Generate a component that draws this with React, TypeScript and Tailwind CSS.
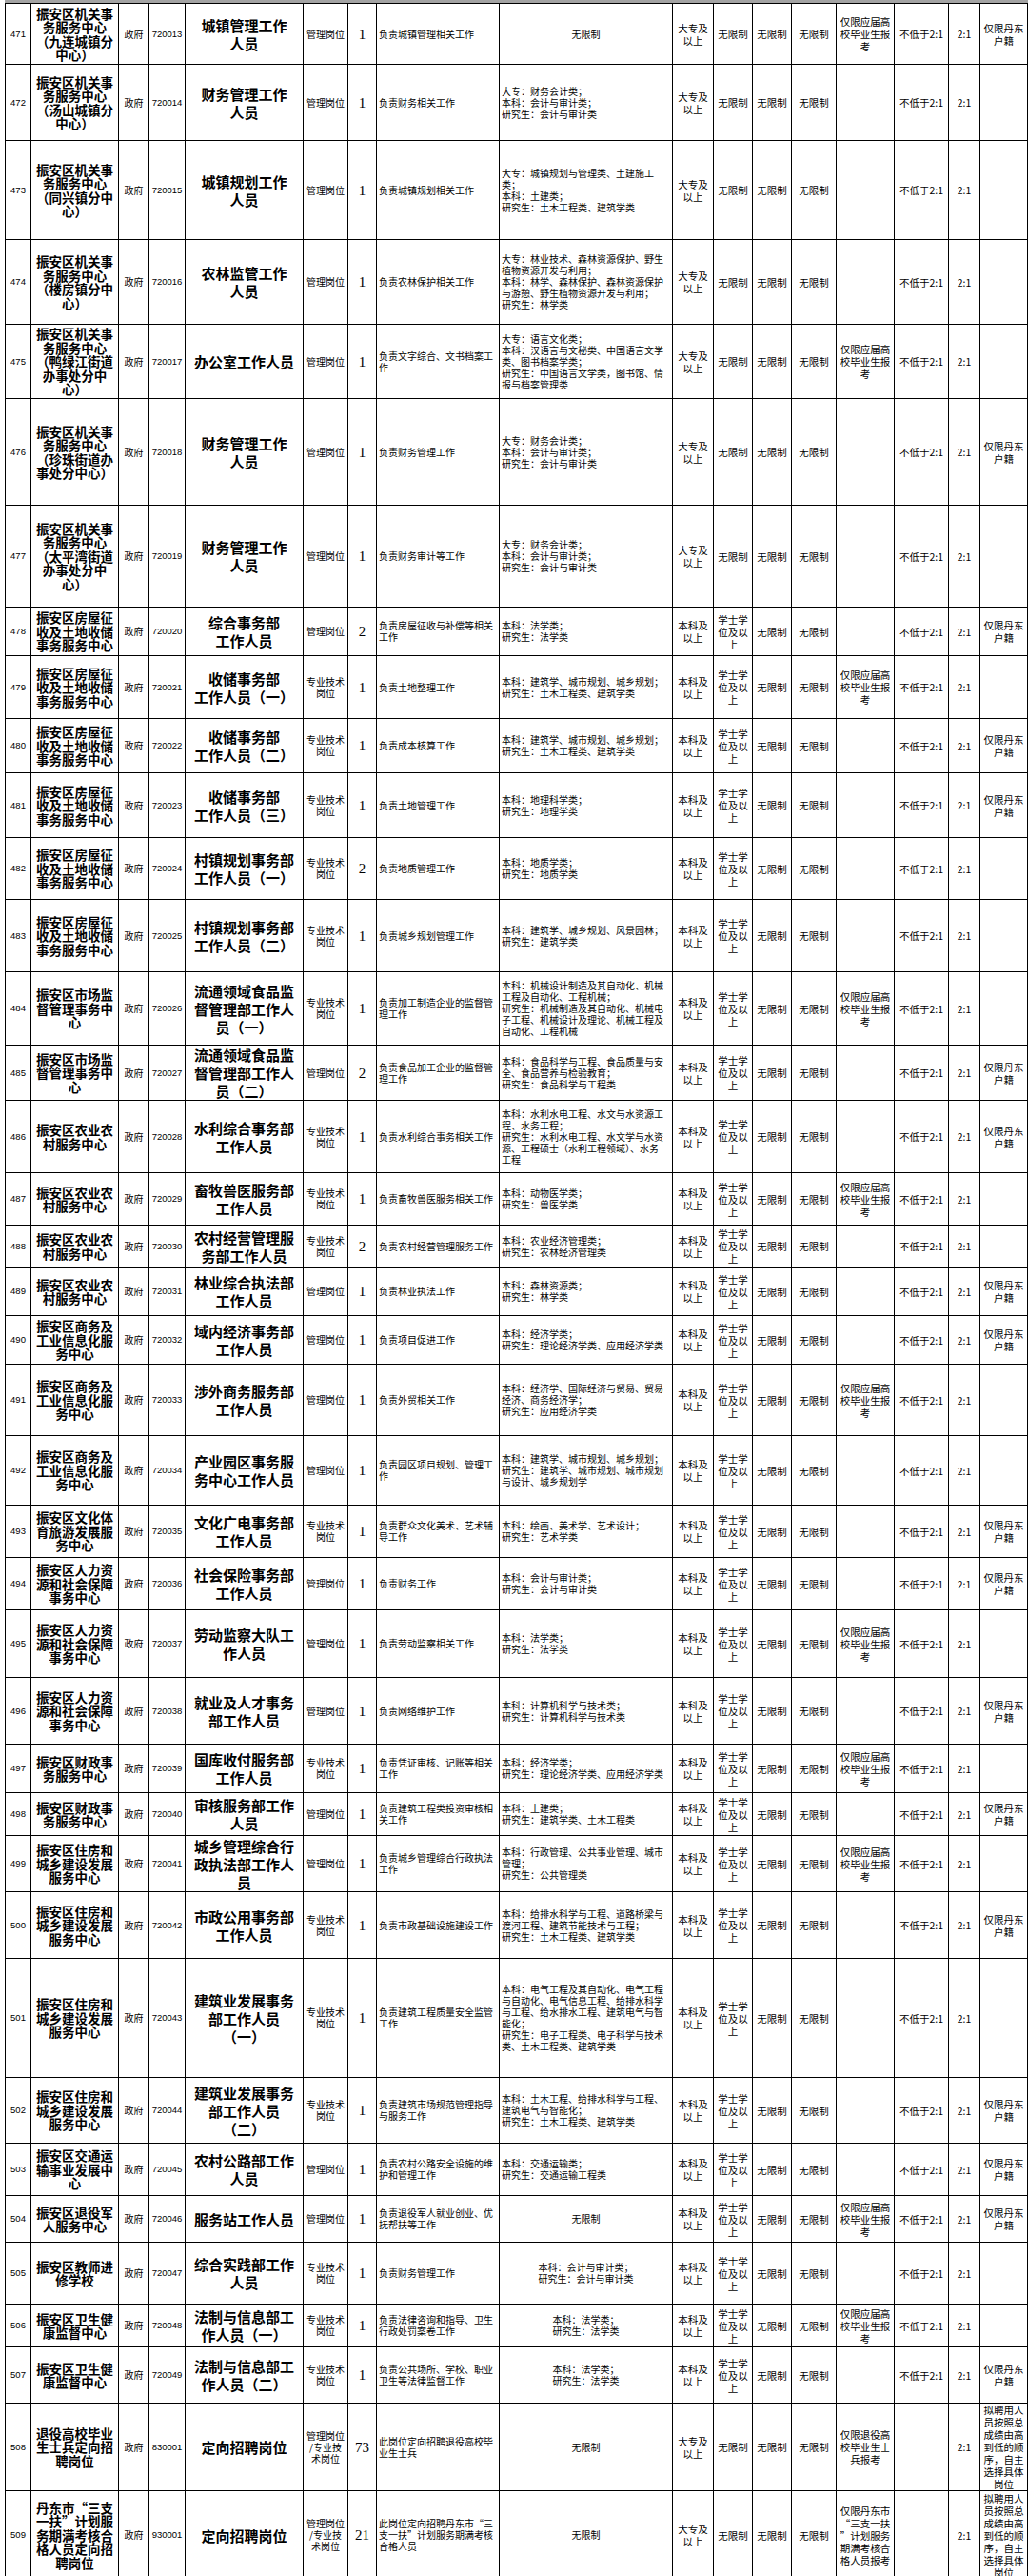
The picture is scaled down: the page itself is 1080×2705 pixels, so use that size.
const JY = "仅限应届高\n校毕业生报\n考";
const DD = "仅限丹东\n户籍";
const BK = "本科及\n以上";
const DZ = "大专及\n以上";
const XS = "学士学\n位及以\n上";
const ZJ = "专业技术\n岗位";
const GL = "管理岗位";
const WX = "无限制";

const JG1 = "振安区机关事\n务服务中心\n";
const FW = "振安区房屋征\n收及土地收储\n事务服务中心";
const SC = "振安区市场监\n督管理事务中\n心";
const NY = "振安区农业农\n村服务中心";
const SW = "振安区商务及\n工业信息化服\n务中心";
const RL = "振安区人力资\n源和社会保障\n事务中心";
const CZ = "振安区财政事\n务服务中心";
const ZF = "振安区住房和\n城乡建设发展\n服务中心";
const WS = "振安区卫生健\n康监督中心";
const KJ = "大专：财务会计类；\n本科：会计与审计类；\n研究生：会计与审计类";
const JZ = "本科：建筑学、城市规划、城乡规划；\n研究生：土木工程类、建筑学类";
const DX = "拟聘用人\n员按照总\n成绩由高\n到低的顺\n序，自主\n选择具体\n岗位";

type Row = {
  n: number;
  h: string;
  unit: string;
  code: string;
  pos: string;
  type: string;
  cnt: string;
  desc: string;
  major: string;
  mc?: boolean;
  edu: string;
  deg: string;
  c13: string;
  c14?: string;
  c16: string;
};

const rows: Row[] = [
  { n: 471, h: "h-[64px]", unit: JG1 + "（九连城镇分\n中心）", code: "720013", pos: "城镇管理工作\n人员", type: GL, cnt: "1", desc: "负责城镇管理相关工作", major: WX, mc: true, edu: DZ, deg: WX, c13: JY, c16: DD },
  { n: 472, h: "h-[80px]", unit: JG1 + "（汤山城镇分\n中心）", code: "720014", pos: "财务管理工作\n人员", type: GL, cnt: "1", desc: "负责财务相关工作", major: KJ, edu: DZ, deg: WX, c13: "", c16: "" },
  { n: 473, h: "h-[104px]", unit: JG1 + "（同兴镇分中\n心）", code: "720015", pos: "城镇规划工作\n人员", type: GL, cnt: "1", desc: "负责城镇规划相关工作", major: "大专：城镇规划与管理类、土建施工\n类；\n本科：土建类；\n研究生：土木工程类、建筑学类", edu: DZ, deg: WX, c13: "", c16: "" },
  { n: 474, h: "h-[89px]", unit: JG1 + "（楼房镇分中\n心）", code: "720016", pos: "农林监管工作\n人员", type: GL, cnt: "1", desc: "负责农林保护相关工作", major: "大专：林业技术、森林资源保护、野生\n植物资源开发与利用；\n本科：林学、森林保护、森林资源保护\n与游憩、野生植物资源开发与利用；\n研究生：林学类", edu: DZ, deg: WX, c13: "", c16: "" },
  { n: 475, h: "h-[78px]", unit: JG1 + "（鸭绿江街道\n办事处分中\n心）", code: "720017", pos: "办公室工作人员", type: GL, cnt: "1", desc: "负责文字综合、文书档案工\n作", major: "大专：语言文化类；\n本科：汉语言与文秘类、中国语言文学\n类、图书档案学类；\n研究生：中国语言文学类，图书馆、情\n报与档案管理类", edu: DZ, deg: WX, c13: JY, c16: "" },
  { n: 476, h: "h-[112px]", unit: JG1 + "（珍珠街道办\n事处分中心）", code: "720018", pos: "财务管理工作\n人员", type: GL, cnt: "1", desc: "负责财务管理工作", major: KJ, edu: DZ, deg: WX, c13: "", c16: DD },
  { n: 477, h: "h-[107px]", unit: JG1 + "（太平湾街道\n办事处分中\n心）", code: "720019", pos: "财务管理工作\n人员", type: GL, cnt: "1", desc: "负责财务审计等工作", major: KJ, edu: DZ, deg: WX, c13: "", c16: "" },
  { n: 478, h: "h-[51px]", unit: FW, code: "720020", pos: "综合事务部\n工作人员", type: GL, cnt: "2", desc: "负责房屋征收与补偿等相关\n工作", major: "本科：法学类；\n研究生：法学类", edu: BK, deg: XS, c13: "", c16: DD },
  { n: 479, h: "h-[66px]", unit: FW, code: "720021", pos: "收储事务部\n工作人员（一）", type: ZJ, cnt: "1", desc: "负责土地整理工作", major: JZ, edu: BK, deg: XS, c13: JY, c16: "" },
  { n: 480, h: "h-[57px]", unit: FW, code: "720022", pos: "收储事务部\n工作人员（二）", type: ZJ, cnt: "1", desc: "负责成本核算工作", major: JZ, edu: BK, deg: XS, c13: "", c16: DD },
  { n: 481, h: "h-[68px]", unit: FW, code: "720023", pos: "收储事务部\n工作人员（三）", type: ZJ, cnt: "1", desc: "负责土地管理工作", major: "本科：地理科学类；\n研究生：地理学类", edu: BK, deg: XS, c13: "", c16: DD },
  { n: 482, h: "h-[65px]", unit: FW, code: "720024", pos: "村镇规划事务部\n工作人员（一）", type: ZJ, cnt: "2", desc: "负责地质管理工作", major: "本科：地质学类；\n研究生：地质学类", edu: BK, deg: XS, c13: "", c16: "" },
  { n: 483, h: "h-[76px]", unit: FW, code: "720025", pos: "村镇规划事务部\n工作人员（二）", type: ZJ, cnt: "1", desc: "负责城乡规划管理工作", major: "本科：建筑学、城乡规划、风景园林；\n研究生：建筑学类", edu: BK, deg: XS, c13: "", c16: "" },
  { n: 484, h: "h-[77px]", unit: SC, code: "720026", pos: "流通领域食品监\n督管理部工作人\n员（一）", type: ZJ, cnt: "1", desc: "负责加工制造企业的监督管\n理工作", major: "本科：机械设计制造及其自动化、机械\n工程及自动化、工程机械；\n研究生：机械制造及其自动化、机械电\n子工程、机械设计及理论、机械工程及\n自动化、工程机械", edu: BK, deg: XS, c13: JY, c16: "" },
  { n: 485, h: "h-[53px]", unit: SC, code: "720027", pos: "流通领域食品监\n督管理部工作人\n员（二）", type: GL, cnt: "2", desc: "负责食品加工企业的监督管\n理工作", major: "本科：食品科学与工程、食品质量与安\n全、食品营养与检验教育；\n研究生：食品科学与工程类", edu: BK, deg: XS, c13: "", c16: DD },
  { n: 486, h: "h-[76px]", unit: NY, code: "720028", pos: "水利综合事务部\n工作人员", type: ZJ, cnt: "1", desc: "负责水利综合事务相关工作", major: "本科：水利水电工程、水文与水资源工\n程、水务工程；\n研究生：水利水电工程、水文学与水资\n源、工程硕士（水利工程领域）、水务\n工程", edu: BK, deg: XS, c13: "", c16: DD },
  { n: 487, h: "h-[55px]", unit: NY, code: "720029", pos: "畜牧兽医服务部\n工作人员", type: ZJ, cnt: "1", desc: "负责畜牧兽医服务相关工作", major: "本科：动物医学类；\n研究生：兽医学类", edu: BK, deg: XS, c13: JY, c16: "" },
  { n: 488, h: "h-[44px]", unit: NY, code: "720030", pos: "农村经营管理服\n务部工作人员", type: ZJ, cnt: "2", desc: "负责农村经营管理服务工作", major: "本科：农业经济管理类；\n研究生：农林经济管理类", edu: BK, deg: XS, c13: "", c16: "" },
  { n: 489, h: "h-[51px]", unit: NY, code: "720031", pos: "林业综合执法部\n工作人员", type: GL, cnt: "1", desc: "负责林业执法工作", major: "本科：森林资源类；\n研究生：林学类", edu: BK, deg: XS, c13: "", c16: DD },
  { n: 490, h: "h-[51px]", unit: SW, code: "720032", pos: "域内经济事务部\n工作人员", type: GL, cnt: "1", desc: "负责项目促进工作", major: "本科：经济学类；\n研究生：理论经济学类、应用经济学类", edu: BK, deg: XS, c13: "", c16: DD },
  { n: 491, h: "h-[75px]", unit: SW, code: "720033", pos: "涉外商务服务部\n工作人员", type: GL, cnt: "1", desc: "负责外贸相关工作", major: "本科：经济学、国际经济与贸易、贸易\n经济、商务经济学；\n研究生：应用经济学类", edu: BK, deg: XS, c13: JY, c16: "" },
  { n: 492, h: "h-[73px]", unit: SW, code: "720034", pos: "产业园区事务服\n务中心工作人员", type: GL, cnt: "1", desc: "负责园区项目规划、管理工\n作", major: "本科：建筑学、城市规划、城乡规划；\n研究生：建筑学、城市规划、城市规划\n与设计、城乡规划学", edu: BK, deg: XS, c13: "", c16: "" },
  { n: 493, h: "h-[55px]", unit: "振安区文化体\n育旅游发展服\n务中心", code: "720035", pos: "文化广电事务部\n工作人员", type: ZJ, cnt: "1", desc: "负责群众文化美术、艺术辅\n导工作", major: "本科：绘画、美术学、艺术设计；\n研究生：艺术学类", edu: BK, deg: XS, c13: "", c16: DD },
  { n: 494, h: "h-[55px]", unit: RL, code: "720036", pos: "社会保险事务部\n工作人员", type: GL, cnt: "1", desc: "负责财务工作", major: "本科：会计与审计类；\n研究生：会计与审计类", edu: BK, deg: XS, c13: "", c16: DD },
  { n: 495, h: "h-[71px]", unit: RL, code: "720037", pos: "劳动监察大队工\n作人员", type: GL, cnt: "1", desc: "负责劳动监察相关工作", major: "本科：法学类；\n研究生：法学类", edu: BK, deg: XS, c13: JY, c16: "" },
  { n: 496, h: "h-[70px]", unit: RL, code: "720038", pos: "就业及人才事务\n部工作人员", type: GL, cnt: "1", desc: "负责网络维护工作", major: "本科：计算机科学与技术类；\n研究生：计算机科学与技术类", edu: BK, deg: XS, c13: "", c16: DD },
  { n: 497, h: "h-[51px]", unit: CZ, code: "720039", pos: "国库收付服务部\n工作人员", type: ZJ, cnt: "1", desc: "负责凭证审核、记账等相关\n工作", major: "本科：经济学类；\n研究生：理论经济学类、应用经济学类", edu: BK, deg: XS, c13: JY, c16: "" },
  { n: 498, h: "h-[45px]", unit: CZ, code: "720040", pos: "审核服务部工作\n人员", type: GL, cnt: "1", desc: "负责建筑工程类投资审核相\n关工作", major: "本科：土建类；\n研究生：建筑学类、土木工程类", edu: BK, deg: XS, c13: "", c16: DD },
  { n: 499, h: "h-[59px]", unit: ZF, code: "720041", pos: "城乡管理综合行\n政执法部工作人\n员", type: GL, cnt: "1", desc: "负责城乡管理综合行政执法\n工作", major: "本科：行政管理、公共事业管理、城市\n管理；\n研究生：公共管理类", edu: BK, deg: XS, c13: JY, c16: "" },
  { n: 500, h: "h-[70px]", unit: ZF, code: "720042", pos: "市政公用事务部\n工作人员", type: ZJ, cnt: "1", desc: "负责市政基础设施建设工作", major: "本科：给排水科学与工程、道路桥梁与\n渡河工程、建筑节能技术与工程；\n研究生：土木工程类、建筑学类", edu: BK, deg: XS, c13: "", c16: DD },
  { n: 501, h: "h-[125px]", unit: ZF, code: "720043", pos: "建筑业发展事务\n部工作人员\n（一）", type: ZJ, cnt: "1", desc: "负责建筑工程质量安全监管\n工作", major: "本科：电气工程及其自动化、电气工程\n与自动化、电气信息工程、给排水科学\n与工程、给水排水工程、建筑电气与智\n能化；\n研究生：电子工程类、电子科学与技术\n类、土木工程类、建筑学类", edu: BK, deg: XS, c13: "", c16: "" },
  { n: 502, h: "h-[69px]", unit: ZF, code: "720044", pos: "建筑业发展事务\n部工作人员\n（二）", type: ZJ, cnt: "1", desc: "负责建筑市场规范管理指导\n与服务工作", major: "本科：土木工程、给排水科学与工程、\n建筑电气与智能化；\n研究生：土木工程类、建筑学类", edu: BK, deg: XS, c13: "", c16: DD },
  { n: 503, h: "h-[55px]", unit: "振安区交通运\n输事业发展中\n心", code: "720045", pos: "农村公路部工作\n人员", type: GL, cnt: "1", desc: "负责农村公路安全设施的维\n护和管理工作", major: "本科：交通运输类；\n研究生：交通运输工程类", edu: BK, deg: XS, c13: "", c16: DD },
  { n: 504, h: "h-[49px]", unit: "振安区退役军\n人服务中心", code: "720046", pos: "服务站工作人员", type: GL, cnt: "1", desc: "负责退役军人就业创业、优\n抚帮扶等工作", major: WX, mc: true, edu: BK, deg: XS, c13: JY, c16: DD },
  { n: 505, h: "h-[65px]", unit: "振安区教师进\n修学校", code: "720047", pos: "综合实践部工作\n人员", type: ZJ, cnt: "1", desc: "负责财务管理工作", major: "本科：会计与审计类；\n研究生：会计与审计类", mc: true, edu: BK, deg: XS, c13: "", c16: "" },
  { n: 506, h: "h-[45px]", unit: WS, code: "720048", pos: "法制与信息部工\n作人员（一）", type: ZJ, cnt: "1", desc: "负责法律咨询和指导、卫生\n行政处罚案卷工作", major: "本科：法学类；\n研究生：法学类", mc: true, edu: BK, deg: XS, c13: JY, c16: "" },
  { n: 507, h: "h-[59px]", unit: WS, code: "720049", pos: "法制与信息部工\n作人员（二）", type: ZJ, cnt: "1", desc: "负责公共场所、学校、职业\n卫生等法律监督工作", major: "本科：法学类；\n研究生：法学类", mc: true, edu: BK, deg: XS, c13: "", c16: DD },
  { n: 508, h: "h-[90px]", unit: "退役高校毕业\n生士兵定向招\n聘岗位", code: "830001", pos: "定向招聘岗位", type: "管理岗位\n/专业技\n术岗位", cnt: "73", desc: "此岗位定向招聘退役高校毕\n业生士兵", major: WX, mc: true, edu: DZ, deg: WX, c13: "仅限退役高\n校毕业生士\n兵报考", c14: "", c16: DX },
  { n: 509, h: "h-[93px]", unit: "丹东市“三支\n一扶”计划服\n务期满考核合\n格人员定向招\n聘岗位", code: "930001", pos: "定向招聘岗位", type: "管理岗位\n/专业技\n术岗位", cnt: "21", desc: "此岗位定向招聘丹东市“三\n支一扶”计划服务期满考核\n合格人员", major: WX, mc: true, edu: DZ, deg: WX, c13: "仅限丹东市\n“三支一扶\n”计划服务\n期满考核合\n格人员报考", c14: "", c16: DX },
];

const cell = "border border-black py-0 align-middle whitespace-pre-line break-all text-black";
const pad = "px-[2px]";
const cjk = "font-['Noto_Sans_CJK_SC',sans-serif]";
const small = "px-[2px] text-[10px] leading-[12px] font-['Noto_Sans_CJK_SC',sans-serif]";
const mid = "px-[1px] text-[10.5px] leading-[13px] font-['Noto_Sans_CJK_SC',sans-serif] text-center";
const num = "px-0 whitespace-nowrap text-[9.5px] leading-[12px] font-['Liberation_Sans','Noto_Sans_CJK_SC',sans-serif] text-center";

export default function App() {
  return (
    <div className="w-[1080px] h-[2705px] bg-white pl-[5px]">
      <div className="h-[3px] w-[1075px] bg-[#a3a3a3]" />
      <table className="table-fixed border-collapse w-[1075px]">
        <colgroup>
          <col className="w-[27px]" />
          <col className="w-[92px]" />
          <col className="w-[32px]" />
          <col className="w-[38px]" />
          <col className="w-[124px]" />
          <col className="w-[47px]" />
          <col className="w-[30px]" />
          <col className="w-[129px]" />
          <col className="w-[182px]" />
          <col className="w-[43px]" />
          <col className="w-[41px]" />
          <col className="w-[41px]" />
          <col className="w-[47px]" />
          <col className="w-[61px]" />
          <col className="w-[57px]" />
          <col className="w-[33px]" />
          <col className="w-[50px]" />
        </colgroup>
        <tbody>
          {rows.map((r) => (
            <tr key={r.n} className={r.h}>
              <td className={`${cell} ${num}`}>{r.n}</td>
              <td className={`${cell} ${pad} ${cjk} text-[13.5px] leading-[14.5px] font-bold text-center`}>{r.unit}</td>
              <td className={`${cell} ${small} text-center`}>政府</td>
              <td className={`${cell} ${num}`}>{r.code}</td>
              <td className={`${cell} ${pad} ${cjk} text-[15px] leading-[19px] font-bold text-center`}>{r.pos}</td>
              <td className={`${cell} ${small} text-center`}>{r.type}</td>
              <td className={`${cell} ${pad} font-['Liberation_Serif',serif] text-[15px] leading-[16px] text-center`}>{r.cnt}</td>
              <td className={`${cell} ${small} text-left`}>{r.desc}</td>
              <td className={`${cell} ${small} ${r.mc ? "text-center" : "text-left"}`}>{r.major}</td>
              <td className={`${cell} ${mid}`}>{r.edu}</td>
              <td className={`${cell} ${mid}`}>{r.deg}</td>
              <td className={`${cell} ${mid}`}>{WX}</td>
              <td className={`${cell} ${mid}`}>{WX}</td>
              <td className={`${cell} ${mid}`}>{r.c13}</td>
              <td className={`${cell} ${mid}`}>{r.c14 ?? "不低于2:1"}</td>
              <td className={`${cell} ${mid}`}>2:1</td>
              <td className={`${cell} ${mid}`}>{r.c16}</td>
            </tr>
          ))}
        </tbody>
      </table>
      <div className="h-[4px] w-[1075px] bg-[#a3a3a3]" />
    </div>
  );
}
